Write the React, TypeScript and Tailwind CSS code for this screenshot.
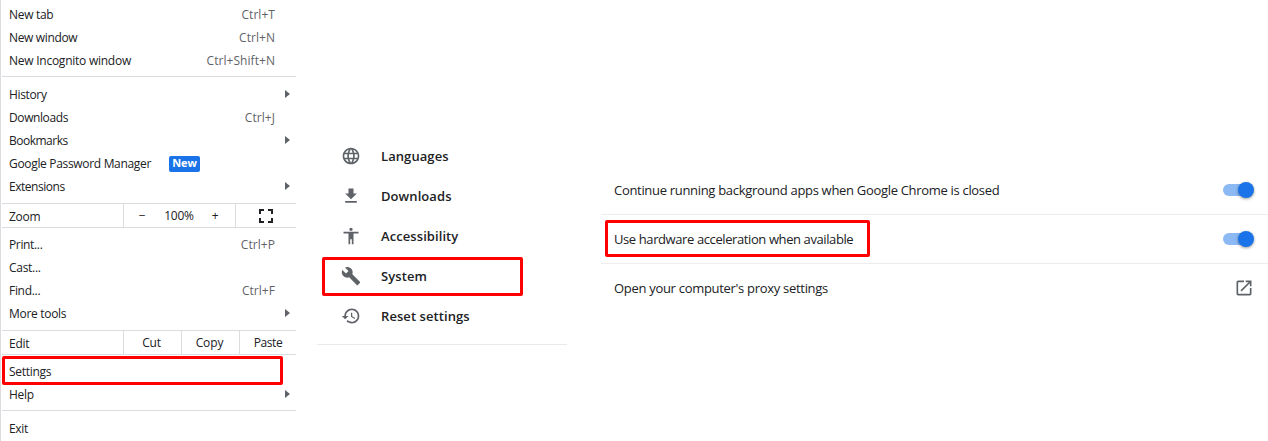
import React from "react";

type ItemProps = {
  label: string;
  tracking: string;
  shortcut?: string;
  submenu?: boolean;
  badge?: string;
  highlighted?: boolean;
};

function Item({ label, tracking, shortcut, submenu, badge, highlighted }: ItemProps) {
  return (
    <div className="relative flex h-[23px] items-center pl-2 pr-[6px]">
      <span className={tracking}>{label}</span>
      {badge && (
        <span className="ml-[18px] flex h-4 w-[31px] items-center justify-center rounded-[2px] bg-[#1a73e8] text-[11px] font-bold tracking-[-0.1px] text-white">
          {badge}
        </span>
      )}
      {shortcut && <span className="ml-auto mr-[15px] tracking-[0.05px] text-[#5f6368]">{shortcut}</span>}
      {submenu && (
        <svg className="mb-px ml-auto" width="5" height="8" viewBox="0 0 5 8" fill="#5f6368">
          <path d="M0 0l5 4-5 4z" />
        </svg>
      )}
      {highlighted && (
        <div className="absolute left-px top-[-4px] h-[29px] w-[281px] rounded-[2px] border-[3px] border-[#ff0000]" />
      )}
    </div>
  );
}

function Separator({ space }: { space: string }) {
  return <div className={`ml-px h-px shrink-0 bg-[#dadce0] ${space}`} />;
}

function Menu() {
  return (
    <nav className="h-[441px] w-[296px] shrink-0 overflow-hidden border-l border-[#dadce0] pt-[3px] text-[12px] tracking-[-0.25px] text-[#202124]">
      <Item label="New tab" tracking="tracking-[-0.3px]" shortcut="Ctrl+T" />
      <Item label="New window" tracking="tracking-[-0.35px]" shortcut="Ctrl+N" />
      <Item label="New Incognito window" tracking="tracking-[-0.25px]" shortcut="Ctrl+Shift+N" />
      <Separator space="mt-1 mb-[6px]" />
      <Item label="History" tracking="tracking-[-0.35px]" submenu />
      <Item label="Downloads" tracking="tracking-[-0.4px]" shortcut="Ctrl+J" />
      <Item label="Bookmarks" tracking="tracking-[-0.5px]" submenu />
      <Item label="Google Password Manager" tracking="tracking-[-0.32px]" badge="New" />
      <Item label="Extensions" tracking="tracking-[-0.47px]" submenu />
      <Separator space="mt-[5px]" />
      <div className="flex h-[23px] items-stretch">
        <div className="flex w-[122px] items-center pl-2 pt-[3px]">Zoom</div>
        <div className="flex w-[112px] items-center border-l border-[#dadce0]">
          <span className="w-9 text-center">−</span>
          <span className="w-[38px] text-center">100%</span>
          <span className="w-[34px] text-center">+</span>
        </div>
        <div className="flex flex-1 items-center border-l border-[#dadce0] pl-[23px]">
          <svg width="14" height="14" viewBox="0 0 14 14" fill="none" stroke="#202124" strokeWidth="2">
            <path d="M1 5V1h4M9 1h4v4M13 9v4H9M5 13H1V9" />
          </svg>
        </div>
      </div>
      <Separator space="mb-[5px]" />
      <Item label="Print..." tracking="tracking-[-0.35px]" shortcut="Ctrl+P" />
      <Item label="Cast..." tracking="tracking-[-0.3px]" />
      <Item label="Find..." tracking="tracking-[-0.3px]" shortcut="Ctrl+F" />
      <Item label="More tools" tracking="tracking-[-0.3px]" submenu />
      <Separator space="mt-[5px]" />
      <div className="flex h-[23px] items-stretch">
        <div className="flex w-[122px] items-center pl-2 pt-[3px]">Edit</div>
        <div className="flex w-[58px] items-center justify-center border-l border-[#dadce0] pr-[2px]">Cut</div>
        <div className="flex w-[58px] items-center justify-center border-l border-[#dadce0] pr-[2px] tracking-[-0.1px]">Copy</div>
        <div className="flex flex-1 items-center justify-center border-l border-[#dadce0] tracking-[-0.4px]">Paste</div>
      </div>
      <Separator space="mb-[5px]" />
      <Item label="Settings" tracking="tracking-[-0.3px]" highlighted />
      <Item label="Help" tracking="tracking-[-0.3px]" submenu />
      <Separator space="mt-1 mb-[6px]" />
      <Item label="Exit" tracking="tracking-[-0.3px]" />
    </nav>
  );
}

const sections = [
  {
    label: "Languages",
    path: "M11.99 2C6.47 2 2 6.48 2 12s4.47 10 9.99 10C17.52 22 22 17.52 22 12S17.52 2 11.99 2zm6.93 6h-2.95c-.32-1.25-.78-2.45-1.38-3.56 1.84.63 3.37 1.91 4.33 3.56zM12 4.04c.83 1.2 1.48 2.53 1.91 3.96h-3.82c.43-1.43 1.08-2.76 1.91-3.96zM4.26 14C4.1 13.36 4 12.69 4 12s.1-1.36.26-2h3.38c-.08.66-.14 1.32-.14 2s.06 1.34.14 2H4.26zm.82 2h2.95c.32 1.25.78 2.45 1.38 3.56-1.84-.63-3.37-1.9-4.33-3.56zm2.95-8H5.08c.96-1.66 2.49-2.93 4.33-3.56C8.81 5.55 8.35 6.75 8.03 8zM12 19.96c-.83-1.2-1.48-2.53-1.91-3.96h3.82c-.43 1.43-1.08 2.76-1.91 3.96zM14.34 14H9.66c-.09-.66-.16-1.32-.16-2s.07-1.35.16-2h4.68c.09.65.16 1.32.16 2s-.07 1.34-.16 2zm.25 5.56c.6-1.11 1.06-2.31 1.38-3.56h2.95c-.96 1.65-2.49 2.93-4.33 3.56zM16.36 14c.08-.66.14-1.32.14-2s-.06-1.34-.14-2h3.38c.16.64.26 1.31.26 2s-.1 1.36-.26 2h-3.38z",
  },
  { label: "Downloads", path: "M19 9h-4V3H9v6H5l7 7 7-7zM5 18v2h14v-2H5z" },
  {
    label: "Accessibility",
    path: "M12 2c1.1 0 2 .9 2 2s-.9 2-2 2-2-.9-2-2 .9-2 2-2zm9 7h-6v13h-2v-6h-2v6H9V9H3V7h18v2z",
  },
  {
    label: "System",
    path: "M22.7 19l-9.1-9.1c.9-2.3.4-5-1.5-6.9-2-2-5-2.4-7.4-1.3L9 6 6 9 1.6 4.7C.4 7.1.9 10.1 2.9 12.1c1.9 1.9 4.6 2.4 6.9 1.5l9.1 9.1c.4.4 1 .4 1.4 0l2.3-2.3c.5-.4.5-1.1.1-1.4z",
  },
  {
    label: "Reset settings",
    path: "M13 3c-4.97 0-9 4.03-9 9H1l3.89 3.89.07.14L9 12H6c0-3.87 3.13-7 7-7s7 3.13 7 7-3.13 7-7 7c-1.93 0-3.68-.79-4.94-2.06l-1.42 1.42C8.27 19.99 10.51 21 13 21c4.97 0 9-4.03 9-9s-4.03-9-9-9zm-1 5v5l4.28 2.54.72-1.21-3.5-2.08V8H12z",
  },
];

function Sidebar() {
  return (
    <aside className="ml-[21px] w-[250px] shrink-0 pt-[136px] text-[13px] font-semibold text-[#202124]">
      {sections.map((s) => (
        <div key={s.label} className="relative flex h-10 items-center pl-6">
          <svg width="20" height="20" viewBox="0 0 24 24" fill="#5f6368">
            <path d={s.path} />
          </svg>
          <span className="ml-5 pt-[2px] tracking-[0.08px]">{s.label}</span>
          {s.label === "System" && (
            <div className="absolute left-[5px] top-px h-[39px] w-[201px] rounded-[2px] border-[3px] border-[#ff0000]" />
          )}
        </div>
      ))}
      <div className="mt-2 h-px bg-[#e8eaed]" />
    </aside>
  );
}

function Toggle() {
  return (
    <span className="relative ml-auto mr-[14px] flex h-4 w-[31px] items-center">
      <span className="h-3 w-7 rounded-full bg-[#8cb9f3]" />
      <span className="absolute right-0 size-4 rounded-full bg-[#1a73e8] shadow-[0_1px_3px_rgba(0,0,0,0.4)]" />
    </span>
  );
}

function SystemPanel() {
  return (
    <main className="ml-[34px] flex-1 pt-[166px] text-[13px] text-[#202124]">
      <div className="flex h-[49px] items-center border-b border-[#ededed] pl-[13px]">
        <span className="pt-[2px] tracking-[-0.31px]">Continue running background apps when Google Chrome is closed</span>
        <Toggle />
      </div>
      <div className="relative flex h-[49px] items-center border-b border-[#ededed] pl-[13px]">
        <span className="pt-[2px] tracking-[-0.4px]">Use hardware acceleration when available</span>
        <Toggle />
        <div className="absolute left-1 top-[5px] h-[37px] w-[265px] rounded-[2px] border-[3px] border-[#ff0000]" />
      </div>
      <div className="flex h-12 items-center pl-[13px]">
        <span className="pt-[2px] tracking-[-0.3px]">Open your computer's proxy settings</span>
        <svg className="ml-auto mr-[14px]" width="20" height="20" viewBox="0 0 24 24" fill="#5f6368">
          <path d="M19 19H5V5h7V3H5c-1.11 0-2 .9-2 2v14c0 1.1.89 2 2 2h14c1.1 0 2-.9 2-2v-7h-2v7zM14 3v2h3.59l-9.83 9.83 1.41 1.41L19 6.41V10h2V3h-7z" />
        </svg>
      </div>
    </main>
  );
}

export default function App() {
  return (
    <div className="flex h-[441px] w-[1268px] overflow-hidden whitespace-nowrap bg-white font-['Open_Sans','Noto_Sans',sans-serif]">
      <Menu />
      <Sidebar />
      <SystemPanel />
    </div>
  );
}
